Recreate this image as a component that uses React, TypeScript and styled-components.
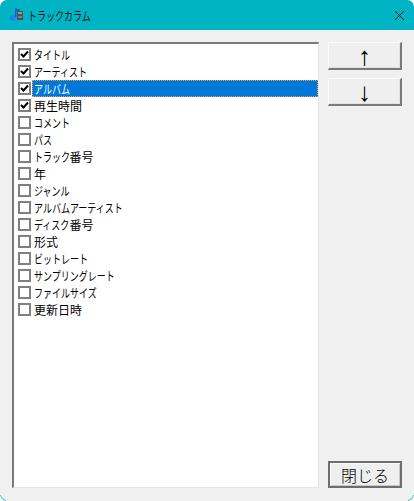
import React from 'react'
import styled, { createGlobalStyle } from 'styled-components'

const columns = [
  { label: 'タイトル', checked: true },
  { label: 'アーティスト', checked: true },
  { label: 'アルバム', checked: true, selected: true },
  { label: '再生時間', checked: true },
  { label: 'コメント' },
  { label: 'パス' },
  { label: 'トラック番号' },
  { label: '年' },
  { label: 'ジャンル' },
  { label: 'アルバムアーティスト' },
  { label: 'ディスク番号' },
  { label: '形式' },
  { label: 'ビットレート' },
  { label: 'サンプリングレート' },
  { label: 'ファイルサイズ' },
  { label: '更新日時' },
]

// katakana is set narrow in the original UI font, kanji stays full width
const Narrow = ({ text }: { text: string }) => (
  <>
    {text.split(/([\u30A0-\u30FF]+)/).map((run, i) =>
      i % 2 === 1 ? (
        <Kana key={i} $count={run.length}>
          {run}
        </Kana>
      ) : (
        run
      ),
    )}
  </>
)

const App = () => {
  return (
    <Window>
      <GlobalStyle />
      <TitleBar>
        <AppIcon viewBox="0 0 16 16">
          <rect x="8" y="4" width="6" height="9" fill="#2c5a8c" />
          <rect x="9" y="5" width="4" height="2" fill="#d88a30" />
          <rect x="9" y="9" width="4" height="2" fill="#c07028" />
          <path d="M6 1 L11 2.5 L11 4 L7.5 4 L7.5 10 L6 10 Z" fill="#1464c8" />
          <circle cx="3.6" cy="11" r="3" fill="#1a86ee" />
        </AppIcon>
        <Title>
          <Narrow text="トラックカラム" />
        </Title>
        <CloseIcon viewBox="0 0 12 12">
          <path d="M1 1 L11 11 M11 1 L1 11" stroke="#111" strokeWidth="1" fill="none" />
        </CloseIcon>
      </TitleBar>
      <Body>
        <List>
          {columns.map((c) => (
            <Row key={c.label}>
              <Box>
                {c.checked && (
                  <svg width="9" height="9" viewBox="0 0 9 9">
                    <path d="M1 4 L3.5 6.5 L8 1.5" stroke="#000" strokeWidth="2" fill="none" />
                  </svg>
                )}
              </Box>
              <Label $selected={c.selected}>
                <Narrow text={c.label} />
              </Label>
            </Row>
          ))}
        </List>
        <Side>
          <Button>↑</Button>
          <Button>↓</Button>
          <Spacer />
          <CloseButton>閉じる</CloseButton>
        </Side>
      </Body>
      <Corner $side="left" />
      <Corner $side="right" />
    </Window>
  )
}

export default App

const GlobalStyle = createGlobalStyle`
  html, body {
    margin: 0;
    background: #fff;
  }
  * {
    box-sizing: border-box;
  }
`

const Window = styled.div`
  position: relative;
  width: 414px;
  height: 501px;
  background: #f0f0f0;
  display: flex;
  flex-direction: column;
  border-radius: 7px;
  overflow: hidden;
  font-family: "Noto Sans CJK JP", "Liberation Sans", sans-serif;
`

const Corner = styled.div<{ $side: 'left' | 'right' }>`
  position: absolute;
  bottom: 0;
  ${(p) => p.$side}: 0;
  width: 6px;
  height: 6px;
  border-bottom: 1px solid #00b4c4;
  border-${(p) => p.$side}: 1px solid #00b4c4;
  border-bottom-${(p) => p.$side}-radius: 7px;
`

const TitleBar = styled.div`
  height: 30px;
  background: #00b4c4;
  display: flex;
  align-items: center;
  padding: 0 9px;
  flex: none;
`

const AppIcon = styled.svg`
  width: 16px;
  height: 16px;
  margin-right: 3px;
`

const Title = styled.div`
  font-size: 12px;
  color: #0b1a1c;
  flex: 1;
`

const CloseIcon = styled.svg`
  width: 11px;
  height: 11px;
`

const Kana = styled.span<{ $count: number }>`
  display: inline-block;
  width: ${(p) => p.$count * 8.85}px;
  white-space: nowrap;
  transform: scaleX(0.75);
  transform-origin: left center;
`

const Body = styled.div`
  flex: 1;
  display: flex;
  padding: 12px 12px 13px 12px;
  gap: 9px;
`

const List = styled.div`
  width: 307px;
  background: #fff;
  border-style: solid;
  border-color: #7a7a7a #e4e4e4 #e4e4e4 #7a7a7a;
  border-width: 2px 1px 1px 2px;
  padding: 2px 0 0 4px;
  font-size: 12px;
`

const Row = styled.div`
  height: 17px;
  display: flex;
  align-items: center;
  gap: 1px;
`

const Box = styled.div`
  width: 13px;
  height: 13px;
  border: 2px solid #808080;
  background: #fff;
  display: flex;
  align-items: center;
  justify-content: center;
  flex: none;
`

const Label = styled.div<{ $selected?: boolean }>`
  flex: 1;
  height: 17px;
  line-height: 17px;
  padding-left: 2px;
  color: ${(p) => (p.$selected ? '#fff' : '#000')};
  background: ${(p) => (p.$selected ? '#0078d7' : 'transparent')};
  outline: ${(p) => (p.$selected ? '1px dotted #f0a040' : 'none')};
  outline-offset: -1px;
`

const Side = styled.div`
  width: 74px;
  display: flex;
  flex-direction: column;
  gap: 8px;
`

const Spacer = styled.div`
  flex: 1;
`

const Button = styled.button`
  height: 28px;
  width: 74px;
  padding: 0;
  background: #efefef;
  border-style: solid;
  border-color: #fbfbfb #7a7a7a #7a7a7a #fbfbfb;
  border-width: 1px 2px 2px 1px;
  box-shadow: inset -1px -1px 0 #e2e2e2;
  font-family: "Liberation Sans", "Noto Sans CJK JP", sans-serif;
  font-size: 26px;
  line-height: 1;
  color: #000;
`

const CloseButton = styled(Button)`
  height: 27px;
  border: 2px solid #6e6e6e;
  box-shadow: inset 1px 1px 0 #fbfbfb, inset -1px -1px 0 #c8c8c8;
  font-family: "Noto Sans CJK JP", "Liberation Sans", sans-serif;
  font-size: 16px;
  font-weight: 300;
`
